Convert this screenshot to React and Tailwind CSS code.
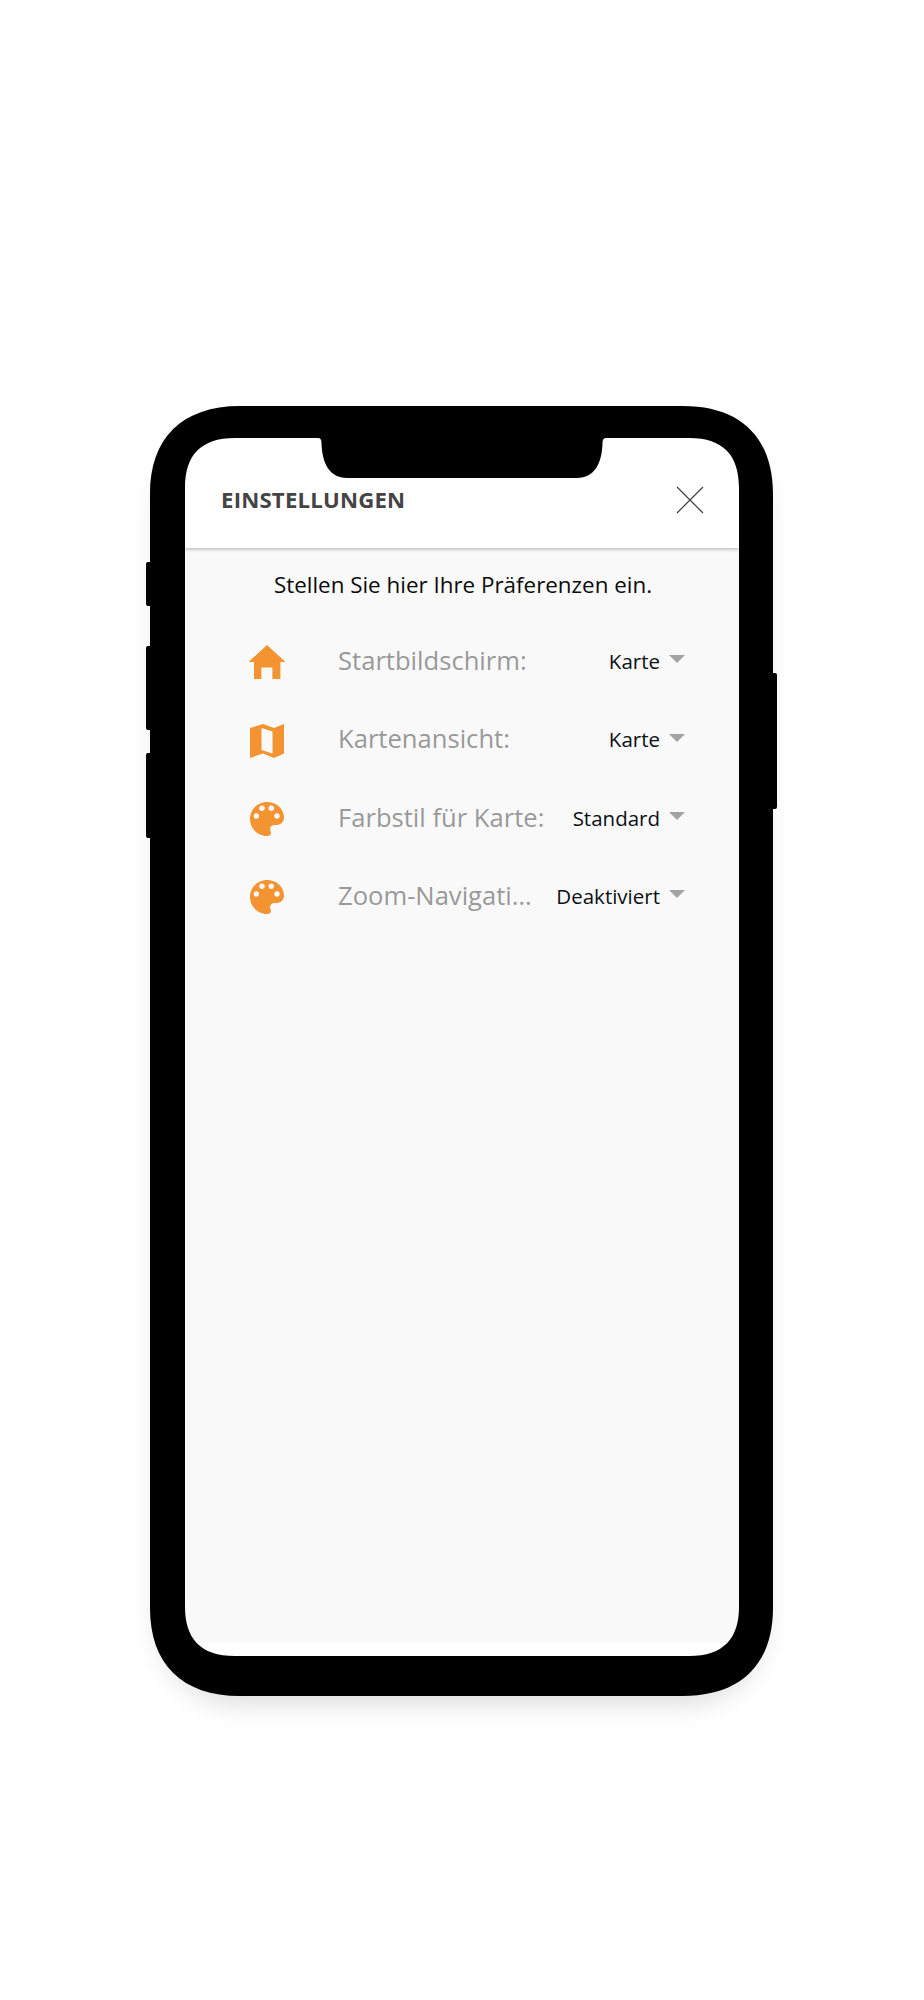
function HomeIcon() {
  return (
    <svg width="36" height="34" viewBox="0 0 36 34" className="block">
      <path d="M18 0 L36 16.5 L36 17 L31.4 17 L31.4 34 L23.4 34 L23.4 22.5 L12.4 22.5 L12.4 34 L5 34 L5 17 L0 17 L0 16.5 Z" fill="#f39332" />
    </svg>
  );
}

function MapIcon() {
  return (
    <svg width="34" height="34" viewBox="0 0 34 34" className="block">
      <path
        fillRule="evenodd"
        d="M0 4 L13 0 L24 4 L34 0 L34 29.5 L24 34 L13 29.5 L0 34 Z M11.500 4 L11.500 26 L22.500 29.500 L22.500 7.500 Z"
        fill="#f39332"
      />
    </svg>
  );
}

function PaletteIcon() {
  return (
    <svg width="34" height="34" viewBox="0 0 34 34" className="block">
      <path
        d="M17 0 C26.400 0 34 6.800 34 15.500 C34 20.500 30 23 26 23 L24.500 23 C21.800 23 20 25 20 27 C20 28.500 21 29.500 21 31 C21 33 19.500 34 17 34 C7.600 34 0 26.400 0 17 C0 7.600 7.600 0 17 0 Z"
        fill="#f39332"
      />
      <circle cx="6.300" cy="14" r="2.700" fill="#f9f9f9" />
      <circle cx="12" cy="6.300" r="2.700" fill="#f9f9f9" />
      <circle cx="21.300" cy="6.300" r="2.700" fill="#f9f9f9" />
      <circle cx="27" cy="14" r="2.700" fill="#f9f9f9" />
    </svg>
  );
}

function Row({ icon, label, value }) {
  return (
    <div className="flex h-[78.4px] items-center pl-[64px] pr-[54px]">
      <div className="flex w-[36px] shrink-0 justify-center">{icon}</div>
      <div className="ml-[53px] w-[208px] shrink-0 truncate pb-[2px] text-[25.6px] text-[#999999]">{label}</div>
      <div className="ml-auto pb-[2px] text-[20.5px] text-[#0b1015]">{value}</div>
      <div className="ml-[9px] h-0 w-0 -translate-y-[3px] border-x-[8px] border-t-[8px] border-x-transparent border-t-[#a3a3a3]" />
    </div>
  );
}

// bezel outline, notch and side buttons, drawn over the screen
const bezel =
  "M0 88 C0 32 32 0 90 0 L533 0 C591 0 623 32 623 88 L623 267 L625 267 Q627 267 627 269 L627 401 Q627 403 625 403 L623 403 " +
  "L623 1202 C623 1258 591 1290 533 1290 L90 1290 C32 1290 0 1258 0 1202 " +
  "L0 432 L-2 432 Q-4 432 -4 430 L-4 349 Q-4 347 -2 347 L0 347 L0 324 L-2 324 Q-4 324 -4 322 L-4 242 Q-4 240 -2 240 L0 240 " +
  "L0 200 L-2 200 Q-4 200 -4 198 L-4 158 Q-4 156 -2 156 L0 156 Z " +
  "M35 82 C35 50 50 32 85 32 L168 32 Q171.500 32 171.500 37 C172 58 180 72 197 72 L427 72 C444 72 452 58 452.500 37 Q452.500 32 456 32 " +
  "L539 32 C574 32 589 50 589 82 L589 1201 C589 1232 574 1250 539 1250 L85 1250 C50 1250 35 1232 35 1201 Z";

export default function App() {
  return (
    <div className="h-[2000px] bg-white pl-[150px] pt-[406px] font-['Open_Sans',sans-serif]">
      <div className="relative h-[1290px] w-[623px] rounded-[90px] pb-[40px] pl-[35px] pr-[34px] pt-[32px] shadow-[0_16px_24px_-6px_rgba(0,0,0,0.12)]">
        <div className="flex h-full flex-col bg-white">
          <div className="relative z-10 flex h-[110px] shrink-0 items-center justify-between bg-white pl-[36px] pr-[35px] pt-[14px] shadow-[0_1px_4px_rgba(0,0,0,0.3)]">
            <div className="text-[22.2px] font-bold tracking-[0.2px] text-[#444444]">EINSTELLUNGEN</div>
            <svg width="28" height="28" viewBox="0 0 28 28">
              <path d="M1 1 L27 27 M27 1 L1 27" stroke="#444" strokeWidth="1.300" fill="none" />
            </svg>
          </div>
          <div className="mb-[13px] flex-1 bg-[#f9f9f9] pt-[22px]">
            <p className="pl-[2px] text-center text-[22.4px] leading-[30px] text-[#0b0b0b]">Stellen Sie hier Ihre Präferenzen ein.</p>
            <div className="mt-[23px]">
              <Row icon={<HomeIcon />} label="Startbildschirm:" value="Karte" />
              <Row icon={<MapIcon />} label="Kartenansicht:" value="Karte" />
              <Row icon={<PaletteIcon />} label="Farbstil für Karte:" value="Standard" />
              <Row icon={<PaletteIcon />} label="Zoom-Navigation:" value="Deaktiviert" />
            </div>
          </div>
        </div>
        <svg width="623" height="1290" viewBox="0 0 623 1290" className="absolute left-0 top-0 z-20 overflow-visible">
          <path d={bezel} fill="#000" fillRule="evenodd" />
        </svg>
      </div>
    </div>
  );
}
